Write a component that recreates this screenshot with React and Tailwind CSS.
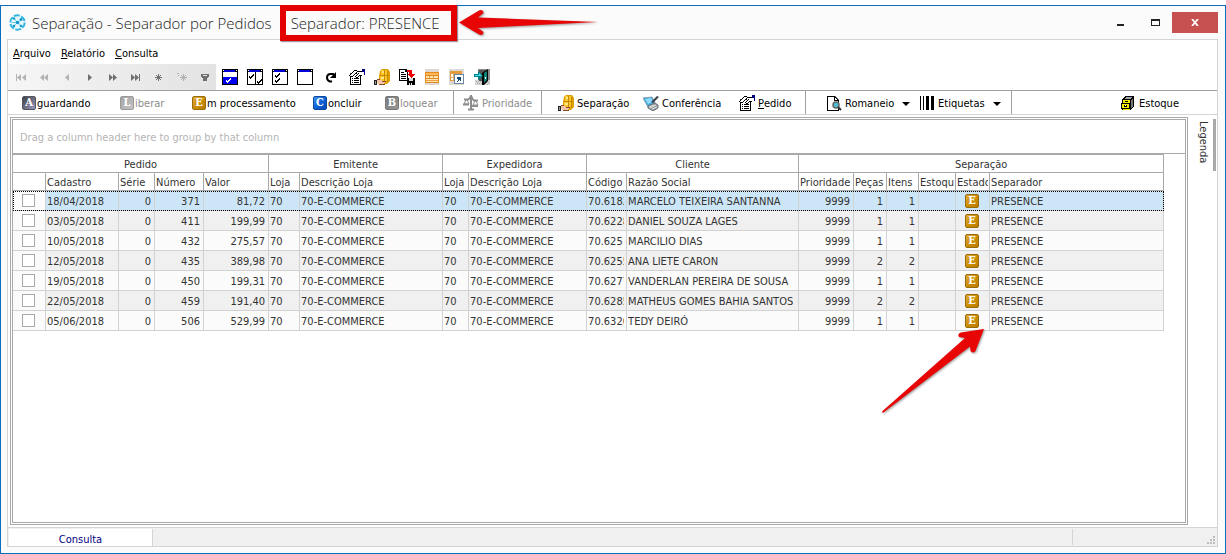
import { useState } from 'react';

const bands = [
  { label: 'Pedido', span: 5 },
  { label: 'Emitente', span: 2 },
  { label: 'Expedidora', span: 2 },
  { label: 'Cliente', span: 2 },
  { label: 'Separação', span: 6 },
];

const columns = [
  { key: 'check', label: '', width: 'w-[33px]' },
  { key: 'cadastro', label: 'Cadastro', width: 'w-[73px]' },
  { key: 'serie', label: 'Série', width: 'w-[36px]', right: true },
  { key: 'numero', label: 'Número', width: 'w-[49px]', right: true },
  { key: 'valor', label: 'Valor', width: 'w-[65px]', right: true },
  { key: 'loja', label: 'Loja', width: 'w-[31px]' },
  { key: 'descricao', label: 'Descrição Loja', width: 'w-[143px]' },
  { key: 'lojaExp', label: 'Loja', width: 'w-[26px]' },
  { key: 'descricaoExp', label: 'Descrição Loja', width: 'w-[118px]' },
  { key: 'codigo', label: 'Código', width: 'w-[40px]' },
  { key: 'razao', label: 'Razão Social', width: 'w-[172px]' },
  { key: 'prioridade', label: 'Prioridade', width: 'w-[55px]', right: true },
  { key: 'pecas', label: 'Peças', width: 'w-[33px]', right: true },
  { key: 'itens', label: 'Itens', width: 'w-[32px]', right: true },
  { key: 'estoque', label: 'Estoque', width: 'w-[37px]' },
  { key: 'estado', label: 'Estado', width: 'w-[34px]' },
  { key: 'separador', label: 'Separador', width: 'w-[174px]' },
];

const loja = { loja: '70', descricao: '70-E-COMMERCE', lojaExp: '70', descricaoExp: '70-E-COMMERCE' };
const base = { ...loja, serie: 0, prioridade: 9999, estoque: '', separador: 'PRESENCE' };

const rows = [
  { ...base, cadastro: '18/04/2018', numero: 371, valor: '81,72', codigo: '70.6182', razao: 'MARCELO TEIXEIRA SANTANNA', pecas: 1, itens: 1 },
  { ...base, cadastro: '03/05/2018', numero: 411, valor: '199,99', codigo: '70.6228', razao: 'DANIEL SOUZA LAGES', pecas: 1, itens: 1 },
  { ...base, cadastro: '10/05/2018', numero: 432, valor: '275,57', codigo: '70.625', razao: 'MARCILIO DIAS', pecas: 1, itens: 1 },
  { ...base, cadastro: '12/05/2018', numero: 435, valor: '389,98', codigo: '70.6255', razao: 'ANA LIETE CARON', pecas: 2, itens: 2 },
  { ...base, cadastro: '19/05/2018', numero: 450, valor: '199,31', codigo: '70.6277', razao: 'VANDERLAN PEREIRA DE SOUSA', pecas: 1, itens: 1 },
  { ...base, cadastro: '22/05/2018', numero: 459, valor: '191,40', codigo: '70.6285', razao: 'MATHEUS GOMES BAHIA SANTOS', pecas: 2, itens: 2 },
  { ...base, cadastro: '05/06/2018', numero: 506, valor: '529,99', codigo: '70.6320', razao: 'TEDY DEIRÓ', pecas: 1, itens: 1 },
];

function Icon({ children, size = 16 }) {
  return (
    <svg width={size} height={size} viewBox="0 0 16 16" shapeRendering="crispEdges" className="shrink-0" aria-hidden="true">
      {children}
    </svg>
  );
}

const badgeColors = {
  gold: 'bg-linear-to-br from-[#e0ab38] via-[#cc8f00] to-[#b87a00] border-[#9a6a08]',
  blue: 'bg-linear-to-br from-[#3f96f4] via-[#0f62d6] to-[#0048b8] border-[#0a469c]',
  slate: 'bg-linear-to-br from-[#3f4046] to-[#9a9cc4] border-[#55565e]',
  silver: 'bg-linear-to-br from-[#a4a4a4] to-[#c4c4c4] border-[#999999]',
  gray: 'bg-linear-to-br from-[#7c7c7c] to-[#969696] border-[#777777]',
};

function Badge({ letter, color }) {
  return (
    <span
      className={`inline-flex size-[14px] shrink-0 items-center justify-center rounded-[2px] border font-['DejaVu_Serif_Condensed','DejaVu_Serif',serif] text-[11px] leading-[12px] font-bold text-white ${badgeColors[color]}`}
    >
      {letter}
    </span>
  );
}

/* ---------- toolbar icons ---------- */

function WindowIcon({ children }) {
  return (
    <Icon>
      <path d="M0 0h16v16H0z" fill="#000" />
      <path d="M1 3h14v12H1z" fill="#fff" />
      <path d="M2 1h11v2H2z" fill="#0000d8" />
      <path d="M1 1h1v1H1zM14 1h1v1h-1z" fill="#fff" />
      {children}
    </Icon>
  );
}

const tick = (x, y, color = '#000') => (
  <path
    d={`M${x} ${y + 1}h1v2h-1zM${x + 1} ${y + 2}h1v2h-1zM${x + 2} ${y + 1}h1v2h-1zM${x + 3} ${y}h1v2h-1zM${x + 4} ${y - 1}h1v2h-1z`}
    fill={color}
  />
);

const BoxHandIcon = () => (
  <Icon>
    <path d="M6 2l2-2h6l2 3v9l-3 3H8l-3-3V7z" fill="#e0a000" shapeRendering="auto" />
    <path d="M7 1h6v5H7zM6 7h7v5H6z" fill="#ffc62a" />
    <path d="M8 2h3v2H8zM7 8h3v2H7z" fill="#ffe58a" />
    <path d="M13 2h1v11h-1zM6 6h9v1H6zM10 1h1v11h-1z" fill="#c48a00" />
    <path d="M3 11h4l2 1h3v1l-3 2H5l-2-1z" fill="#f3c5a4" />
    <path d="M3 10h3v1H3zM5 15h6v1H5zM8 12h4v1H8z" fill="#8b4c2c" />
    <path d="M0 11h3v5H0z" fill="#222" />
    <path d="M1 12h1v3H1z" fill="#999" />
  </Icon>
);

const FormHandIcon = () => (
  <Icon>
    <path d="M1 4h11v12H1z" fill="#000" />
    <path d="M2 5h9v10H2z" fill="#fff" />
    <path d="M3 9h1v1H3zM5 9h5v1H5zM3 11h1v1H3zM5 11h5v1H5zM3 13h1v1H3zM5 13h5v1H5z" fill="#000" />
    <path d="M0 6l6-5h3l4 1v4h-2L7 9 5 7 3 8z" fill="#fff" shapeRendering="auto" />
    <path
      d="M5 1h3v1H5zM8 2h5v1H8zM4 2h1v1H4zM3 3h1v1H3zM2 4h1v1H2zM1 5h1v1H1zM0 6h1v1H0zM1 7h3v1H1zM4 6h1v1H4zM6 4h2v1H6zM5 5h1v1H5zM8 5h1v1H8zM7 6h1v1H7zM6 7h1v1H6zM7 8h2v1H7zM9 7h1v1H9zM10 6h3v1h-3zM9 4h1v1H9zM7 3h1v1H7z"
      fill="#000"
    />
    <path d="M13 0h3v6h-1V3h-2z" fill="#000080" />
  </Icon>
);

const selectIcons = [
  {
    title: 'Marcar seleção',
    icon: (
      <WindowIcon>
        <path d="M1 8h14v7H1z" fill="#0000f0" />
        {tick(4, 10, '#fff')}
      </WindowIcon>
    ),
  },
  {
    title: 'Inverter seleção',
    icon: (
      <WindowIcon>
        <path d="M8 3h1v12H8z" fill="#000" />
        {tick(2, 6)}
        {tick(10, 11)}
      </WindowIcon>
    ),
  },
  {
    title: 'Marcar todos',
    icon: (
      <WindowIcon>
        {tick(3, 5)}
        {tick(3, 10)}
      </WindowIcon>
    ),
  },
  { title: 'Desmarcar todos', icon: <WindowIcon /> },
];

const toolIcons = [
  {
    title: 'Atualizar',
    icon: (
      <Icon>
        <path d="M8 12.500H6q-3-1-3-4t3-3.500h4" fill="none" stroke="#000" strokeWidth="2" shapeRendering="auto" />
        <path d="M12 3v6H6z" fill="#000" shapeRendering="auto" />
      </Icon>
    ),
  },
  { title: 'Propriedades', icon: <FormHandIcon /> },
  { title: 'Separação de produtos', icon: <BoxHandIcon /> },
  {
    title: 'Exportar',
    icon: (
      <Icon>
        <path d="M0 0h7l2 2v10H0z" fill="#000" />
        <path d="M1 1h5v2h2v8H1z" fill="#fff" />
        <path d="M2 3h3v1H2zM2 5h5v1H2zM2 7h5v1H2zM2 9h5v1H2z" fill="#000" />
        <path d="M8 1h5v4h3l-4 4-4-4h2V3H8z" fill="#f00000" />
        <path d="M8 9h8v7H8z" fill="#000" />
        <path d="M10 9h4v3h-4zM10 14h3v2h-3z" fill="#ddd" />
        <path d="M11 14h1v2h-1z" fill="#000" />
      </Icon>
    ),
  },
  {
    title: 'Layout do relatório',
    icon: (
      <Icon>
        <path d="M1 0h14v16H1z" fill="#dcd9d3" />
        <path d="M1 3h14v11H1z" fill="#e58a1c" />
        <path d="M2 4h12v2H2z" fill="#ffb95a" />
        <path d="M2 7h12v2H2zM2 10h12v3H2z" fill="#ffe3b4" />
        <path d="M5 7h1v2H5zM9 7h1v2H9zM2 11h12v1H2z" fill="#eda03c" />
      </Icon>
    ),
  },
  {
    title: 'Copiar layout',
    icon: (
      <Icon>
        <path d="M0 0h15v16H0z" fill="#dcd9d3" />
        <path d="M1 2h12v10H1z" fill="#e59a3c" />
        <path d="M2 5h10v6H2z" fill="#fff" />
        <path d="M4 5h1v6H4zM2 8h3v1H2z" fill="#e5b060" />
        <path d="M5 5h10v10H5z" fill="#6a86a8" />
        <path d="M6 6h8v8H6z" fill="#fff" />
        <path d="M8 8h4v4h-1v-1h-1v1H9v1H8v-1h1v-2H8z" fill="#14477c" />
      </Icon>
    ),
  },
  {
    title: 'Sair',
    icon: (
      <Icon>
        <path d="M4 0h12v13H4z" fill="#8c8c8c" />
        <path d="M1 11h15v5H1z" fill="#d4d4d4" />
        <path d="M2 12h1v1H2zM4 12h1v1H4zM3 14h1v1H3zM5 14h1v1H5zM6 12h1v1H6zM7 14h1v1H7zM12 13h1v1h-1zM14 13h1v1h-1zM13 15h1v1h-1z" fill="#aaa" />
        <path d="M5 1h8v11H5z" fill="#555" />
        <path d="M8 4l6-4v12l-4 4H8z" fill="#000" shapeRendering="auto" />
        <path d="M10 4l3-2v9l-3 3z" fill="#0b8378" shapeRendering="auto" />
        <path d="M0 5h4V2l5 5-5 4V8H0z" fill="#007f86" shapeRendering="auto" />
        <path d="M1 6h4V4l3 3H1z" fill="#3fe0e8" shapeRendering="auto" />
        <path d="M11 8h1v2h-1z" fill="#fff" />
      </Icon>
    ),
  },
];

const navIcons = [
  { title: 'Primeiro', d: 'M3 5h1v7H3zM8 5v7L4 8.500zM13 5v7L9 8.500z', off: true },
  { title: 'Página anterior', d: 'M8 5v7L4 8.500zM12 5v7L8 8.500z', off: true },
  { title: 'Anterior', d: 'M10 5v7L6 8.500z', off: true },
  { title: 'Próximo', d: 'M6 5v7l4-3.500z' },
  { title: 'Próxima página', d: 'M4 5v7l4-3.500zM8 5v7l4-3.500z' },
  { title: 'Último', d: 'M3 5v7l4-3.500zM7 5v7l4-3.500zM11 5h1v7h-1z' },
  { title: 'Marcar registro', d: 'M7 5h1v2h1V6h1v1H9v1h2v1H9v1h1v1H9v-1H8v2H7v-2H6v1H5v-1h1V9H4V8h2V7H5V6h1v1h1z' },
  { title: 'Ir para registro', d: 'M3 4h2v1H3zM4 6h1v1H4zM9 5h1v2h1V6h1v1h-1v1h2v1h-2v1h1v1h-1v-1h-1v2H9v-2H8v1H7v-1h1V9H6V8h2V7H7V6h1v1h1z', off: true },
  { title: 'Filtrar', d: 'M4 5h8v3h-1v1h-1v3H6V9H5V8H4zM6 6v1h4V6z' },
];

const ScaleIcon = () => (
  <Icon>
    <g fill="none" stroke="#8d8d8d" shapeRendering="auto">
      <path d="M8 0v14M5 14.500h6" strokeWidth="2" />
      <path d="M1 4.500h4l3-2 3 3h4" strokeWidth="2" />
      <path d="M3 5L1 9h5L4 5M12 6l-2 4h5l-2-4" />
      <path d="M0 9.500h6M9 11h6" strokeWidth="2" />
      <circle cx="8" cy="2.500" r="1.500" />
    </g>
  </Icon>
);

const ScannerIcon = () => (
  <Icon>
    <g shapeRendering="auto">
      <path d="M0 3l9-1 3 6-7 4z" fill="#3aa7e0" stroke="#86a0ae" />
      <path d="M2 4l6-1 2 4-5 2z" fill="#8cdcff" />
      <path d="M5 11l7-3 3 2v3l-5 3-5-3z" fill="#969b9e" stroke="#6d7376" />
      <path d="M6 12l5-2M7 13l6-3M9 14l5-2" stroke="#e2e5e6" />
      <path d="M8 7l6-6 2 1-6 6z" fill="#3b4146" />
    </g>
  </Icon>
);

const ReportIcon = () => (
  <Icon>
    <path d="M1 1h8l4 4v11H1z" fill="#000" shapeRendering="auto" />
    <path d="M2 2h6v4h4v9H2z" fill="#fff" />
    <path d="M9 3v2h2z" fill="#fff" />
    <g shapeRendering="auto">
      <circle cx="10" cy="10" r="3" fill="#49bfd0" stroke="#666" strokeWidth="1.500" />
      <path d="M12 12l3 3" stroke="#333" strokeWidth="2" />
    </g>
  </Icon>
);

const BarsIcon = () => (
  <Icon>
    <path d="M1 1h1v14H1zM4 1h1v14H4zM7 1h3v14H7zM12 1h3v14h-3z" fill="#000" />
  </Icon>
);

const StockIcon = () => (
  <Icon>
    <path d="M2 4l4-3h8v11l-4 3H2z" fill="#000" />
    <path d="M4 4l3-2h6l-3 2z" fill="#a6a6a6" />
    <path d="M11 5l2-1v7l-2 2z" fill="#777" />
    <path d="M3 5h7v3H3zM2 9h7v4H2zM3 14h7v1H3z" fill="#f5ea00" />
    <path d="M1 8h8v1H1zM1 8h1v6H1zM2 13h7v1H2zM9 8h1v6H9zM4 10h3v2H4z" fill="#000" />
    <path d="M5 6h3v1H5z" fill="#000" />
    <path d="M5 10h1v1H5z" fill="#fff" />
  </Icon>
);

const Caret = () => (
  <svg width="8" height="4" viewBox="0 0 8 4" className="ml-2" aria-hidden="true">
    <path d="M0 0h8L4 4z" fill="#000" />
  </svg>
);

function Action({ icon, children, width, disabled, gap = 'gap-[3px]' }) {
  return (
    <button
      type="button"
      disabled={disabled}
      className={`flex h-full shrink-0 items-center whitespace-nowrap ${gap} ${width} ${disabled ? 'text-[#8c8c8c]' : 'text-black'}`}
    >
      {icon}
      <span className="flex items-center pt-[2px]">{children}</span>
    </button>
  );
}

function Group({ children, className = '' }) {
  return <div className={`flex h-full shrink-0 items-center border-r border-[#a0a0a0] ${className}`}>{children}</div>;
}

function TitleBar() {
  return (
    <header className="flex h-[33px] shrink-0 items-start justify-between bg-[#fbfbfb]">
      <div className="flex h-full items-center gap-[6px] pl-[2px]">
        <svg width="17" height="17" viewBox="0 0 17 17" aria-hidden="true">
          <circle cx="8.500" cy="8.500" r="7.200" fill="#e9f8fd" stroke="#35b5e0" strokeWidth="2" strokeDasharray="6 1.500" />
          <path d="M8.500 8.500L5 4.500M8.500 8.500l4-3M8.500 8.500l4 3.500M8.500 8.500L5 12M8.500 8.500H3" stroke="#6fcbea" />
          <g fill="#159ccc">
            <circle cx="5" cy="4.500" r="1.300" />
            <circle cx="12" cy="5.500" r="1.500" />
            <circle cx="12" cy="12" r="1.300" />
            <circle cx="5" cy="12" r="1.300" />
            <circle cx="8.500" cy="8.500" r="1.800" />
          </g>
        </svg>
        <h1 className="flex gap-[19px] font-['Open_Sans',sans-serif] text-[15px] leading-5 font-light whitespace-nowrap text-[#222]">
          <span>Separação - Separador por Pedidos</span>
          <span>Separador: PRESENCE</span>
        </h1>
      </div>
      <div className="flex pt-[6px]">
        <button type="button" aria-label="Minimizar" className="flex h-[21px] w-[34px] items-center justify-center">
          <svg width="8" height="8" viewBox="0 0 8 8"><path d="M0 5h7v2H0z" fill="#222" /></svg>
        </button>
        <button type="button" aria-label="Maximizar" className="flex h-[21px] w-[34px] items-center justify-center">
          <svg width="9" height="7" viewBox="0 0 9 7"><path fillRule="evenodd" d="M0 0h9v7H0zM1 2v4h7V2z" fill="#222" /></svg>
        </button>
        <button type="button" aria-label="Fechar" className="flex h-[21px] w-[46px] items-center justify-center bg-[#c75050]">
          <svg width="8" height="7" viewBox="0 0 8 7"><path d="M1 0l6 7M7 0L1 7" stroke="#fff" strokeWidth="1.800" /></svg>
        </button>
      </div>
    </header>
  );
}

function IconButtons({ items, className }) {
  return (
    <div className={`flex items-center ${className}`}>
      {items.map((t) => (
        <button key={t.title} type="button" aria-label={t.title} className="flex w-[25px] justify-center">
          {t.icon}
        </button>
      ))}
    </div>
  );
}

function Toolbar() {
  return (
    <div className="flex h-[26px] shrink-0 items-stretch">
      <div className="flex items-center bg-linear-to-r from-[#f6f6f6] to-[#e3e3e3] pl-px">
        {navIcons.map((n) => (
          <button key={n.title} type="button" aria-label={n.title} disabled={n.off} className="flex w-[23px] justify-center">
            <svg width="16" height="16" viewBox="0 0 16 16" aria-hidden="true">
              <path d={n.d} fillRule="evenodd" fill={n.off ? '#b2b2b2' : '#707070'} />
            </svg>
          </button>
        ))}
      </div>
      <IconButtons items={selectIcons} className="pl-px" />
      <IconButtons items={toolIcons} className="pl-[2px]" />
    </div>
  );
}

function Actions() {
  return (
    <div className="flex h-[25px] shrink-0 items-center border-t border-b border-t-[#a0a0a0] border-b-[#d4d4d4]">
      <Group className="w-[446px] pl-[14px]">
        <Action gap="gap-px" width="w-[98px]" icon={<Badge letter="A" color="slate" />}>guardando</Action>
        <Action gap="gap-px" width="w-[72px]" disabled icon={<Badge letter="L" color="silver" />}>iberar</Action>
        <Action gap="gap-px" width="w-[121px]" icon={<Badge letter="E" color="gold" />}>m processamento</Action>
        <Action gap="gap-px" width="w-[72px]" icon={<Badge letter="C" color="blue" />}>oncluir</Action>
        <Action gap="gap-px" width="w-[60px]" disabled icon={<Badge letter="B" color="gray" />}>loquear</Action>
      </Group>
      <Group className="w-[88px] pl-[9px]">
        <Action width="w-[76px]" disabled icon={<ScaleIcon />}>Prioridade</Action>
      </Group>
      <Group className="w-[264px] pl-4">
        <Action width="w-[85px]" icon={<BoxHandIcon />}>Separação</Action>
        <Action width="w-[96px]" icon={<ScannerIcon />}>Conferência</Action>
        <Action width="w-[60px]" icon={<FormHandIcon />}><u>P</u>edido</Action>
      </Group>
      <Group className="w-[206px] pl-5">
        <Action width="w-[93px]" icon={<ReportIcon />}>Romaneio<Caret /></Action>
        <Action width="w-[90px]" icon={<BarsIcon />}>Etiquetas<Caret /></Action>
      </Group>
      <div className="flex h-full flex-1 items-center justify-end pr-[38px]">
        <Action width="" icon={<StockIcon />}>Estoque</Action>
      </div>
    </div>
  );
}

function Grid({ checked, onToggle }) {
  return (
    <div className="flex min-w-0 flex-1 flex-col overflow-hidden border-3 border-double border-[#a9a9a9] bg-white">
      <div className="flex h-[34px] shrink-0 items-center border-b border-[#a9a9a9] pt-[2px] pl-[7px] text-[#b4b4b4]">
        Drag a column header here to group by that column
      </div>
      <table className="w-[1151px] table-fixed border-separate border-spacing-0 border-t border-[#a9a9a9] text-[#333]">
        <colgroup>
          {columns.map((c) => <col key={c.key} className={c.width} />)}
        </colgroup>
        <thead>
          <tr className="h-[18px]">
            {bands.map((b) => (
              <th key={b.label} colSpan={b.span} className="border-r border-b border-[#a9a9a9] p-0 pt-[2px] text-center font-normal">
                {b.label}
              </th>
            ))}
          </tr>
          <tr className="h-[18px]">
            {columns.map((c) => (
              <th key={c.key} className="border-r border-b border-[#a9a9a9] p-0 pt-[2px] pr-px pl-px text-left font-normal whitespace-nowrap">
                <div className="overflow-hidden">{c.label}</div>
              </th>
            ))}
          </tr>
        </thead>
        <tbody>
          {rows.map((row, i) => (
            <tr
              key={row.numero}
              className={`h-[20px] ${i === 0 ? 'bg-[#cde6f7] outline-1 -outline-offset-1 outline-black outline-dotted' : i % 2 ? 'bg-[#f0f0f0]' : 'bg-[#fbfbfb]'}`}
            >
              {columns.map((c) => (
                <td
                  key={c.key}
                  className={`border-r border-b border-[#d2d2d2] p-0 whitespace-nowrap ${c.right ? 'pr-[3px] text-right' : 'pr-[2px] pl-px'} ${c.key === 'check' ? 'bg-[#fbfbfb]' : c.key === 'estado' ? '' : 'pt-[2px]'}`}
                >
                  {c.key === 'check' ? (
                    <input
                      type="checkbox"
                      aria-label={`Pedido ${row.numero}`}
                      checked={checked.includes(row.numero)}
                      onChange={() => onToggle(row.numero)}
                      className="ml-2 block size-[13px] appearance-none border border-[#a9a9a9] bg-white checked:bg-[#3a7bbf]"
                    />
                  ) : c.key === 'estado' ? (
                    <span className="flex justify-center"><Badge letter="E" color="gold" /></span>
                  ) : (
                    <div className="overflow-hidden">{row[c.key]}</div>
                  )}
                </td>
              ))}
            </tr>
          ))}
        </tbody>
      </table>
    </div>
  );
}

function Annotations() {
  return (
    <>
      <div className="pointer-events-none absolute top-[5px] left-[280px] h-[36px] w-[177px] border-6 border-[#e50000] shadow-[1px_1px_1px_rgba(0,0,0,0.4)]" />
      <svg className="pointer-events-none absolute top-[6px] left-[456px] drop-shadow-[1px_1px_1px_rgba(0,0,0,0.4)]" width="146" height="34" viewBox="0 0 146 34" aria-hidden="true">
        <path d="M3 16.500L23 4.500Q27 3 27.500 7L22 11.500L142 16L22 22L27.500 26Q27 30 23 28.500Z" fill="#e80505" />
      </svg>
      <svg className="pointer-events-none absolute top-[325px] left-[878px] drop-shadow-[1px_1px_1px_rgba(0,0,0,0.4)]" width="110" height="92" viewBox="0 0 110 92" aria-hidden="true">
        <path d="M106 4L83 7.500Q79 9 81 12L87 13L4 86.500Q4 88 5.500 87.500L92 21.500L92.500 26Q95 29 97.500 26Z" fill="#e80505" />
      </svg>
    </>
  );
}

export default function App() {
  const [checked, setChecked] = useState([]);
  const toggle = (id) => setChecked((c) => (c.includes(id) ? c.filter((x) => x !== id) : [...c, id]));

  return (
    <div className="relative flex h-screen flex-col overflow-hidden bg-white pt-[5px] font-['DejaVu_Sans_Condensed','Noto_Sans',sans-serif] text-[11px] leading-[14px]">
      <div className="flex min-h-0 flex-1 flex-col border border-[#0a6ebd] bg-[#fbfbfb] pr-[7px] pb-[6px] pl-[6px]">
        <TitleBar />
        <div className="flex min-h-0 flex-1 flex-col border border-[#d4d4d4] bg-white">
          <nav className="flex h-[24px] shrink-0 items-center gap-[10px] pt-[3px] pl-[5px] text-black">
            <button type="button"><u>A</u>rquivo</button>
            <button type="button"><u>R</u>elatório</button>
            <button type="button"><u>C</u>onsulta</button>
          </nav>
          <Toolbar />
          <Actions />
          <main className="flex min-h-0 flex-1 py-[2px] pl-[2px]">
            <Grid checked={checked} onToggle={toggle} />
            <aside className="flex w-[29px] shrink-0 items-start justify-end gap-[3px] pr-px">
              <button type="button" className="pt-1 text-[#333] [writing-mode:vertical-rl]">Legenda</button>
              <span className="mt-[2px] h-[52px] w-[3px] bg-[#a9a9a9]" />
            </aside>
          </main>
          <footer className="flex h-[19px] shrink-0 items-stretch border-t border-[#d4d4d4] bg-[#f0f0f0]">
            <button type="button" className="mt-px ml-px w-[144px] border-r border-[#d4d4d4] bg-white pt-[4px] text-[#000080]">
              Consulta
            </button>
            <div className="flex-1" />
            <div className="my-px flex w-[145px] items-end justify-end border-l border-[#d4d4d4] pr-[2px] pb-px">
              <svg width="8" height="8" viewBox="0 0 8 8" aria-hidden="true">
                <path d="M6 0h2v2H6zM3 3h2v2H3zM6 3h2v2H6zM0 6h2v2H0zM3 6h2v2H3zM6 6h2v2H6z" fill="#bdbdbd" />
              </svg>
            </div>
          </footer>
        </div>
      </div>
      <Annotations />
    </div>
  );
}
